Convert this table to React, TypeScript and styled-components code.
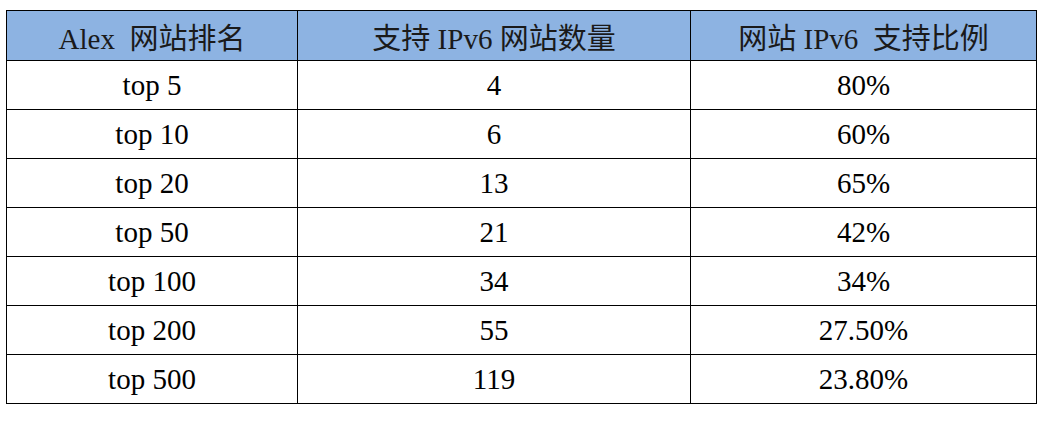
import styled, { createGlobalStyle } from "styled-components";

const GlobalStyle = createGlobalStyle`
  body {
    margin: 0;
    background: #ffffff;
    font-family: "Liberation Serif", "Noto Sans CJK SC", serif;
  }
`;

const Wrapper = styled.div`
  padding: 10px 0 0 6px;
`;

const Table = styled.table`
  border-collapse: collapse;
  width: 1027px;
  table-layout: fixed;
  color: #000;
`;

const HeadCell = styled.th<{ $w: number }>`
  width: ${(p) => p.$w}px;
  height: 49px;
  padding: 0;
  background: #8db3e2;
  border: 1.5px solid #000;
  font-weight: normal;
  font-size: 29px;
  white-space: pre;
  text-align: center;
  color: #1a1a1a;
`;

const Cell = styled.td`
  height: 48px;
  padding: 0;
  border: 1.5px solid #000;
  font-size: 29px;
  text-align: center;
`;

interface IRow {
  rank: string;
  count: number;
  ratio: string;
}

const rows: IRow[] = [
  { rank: "top 5", count: 4, ratio: "80%" },
  { rank: "top 10", count: 6, ratio: "60%" },
  { rank: "top 20", count: 13, ratio: "65%" },
  { rank: "top 50", count: 21, ratio: "42%" },
  { rank: "top 100", count: 34, ratio: "34%" },
  { rank: "top 200", count: 55, ratio: "27.50%" },
  { rank: "top 500", count: 119, ratio: "23.80%" },
];

function App() {
  return (
    <Wrapper>
      <GlobalStyle />
      <Table>
        <thead>
          <tr>
            <HeadCell $w={290}>{"Alex  网站排名"}</HeadCell>
            <HeadCell $w={392}>{"支持 IPv6 网站数量"}</HeadCell>
            <HeadCell $w={345}>{"网站 IPv6  支持比例"}</HeadCell>
          </tr>
        </thead>
        <tbody>
          {rows.map((row) => (
            <tr key={row.rank}>
              <Cell>{row.rank}</Cell>
              <Cell>{row.count}</Cell>
              <Cell>{row.ratio}</Cell>
            </tr>
          ))}
        </tbody>
      </Table>
    </Wrapper>
  );
}

export default App;
